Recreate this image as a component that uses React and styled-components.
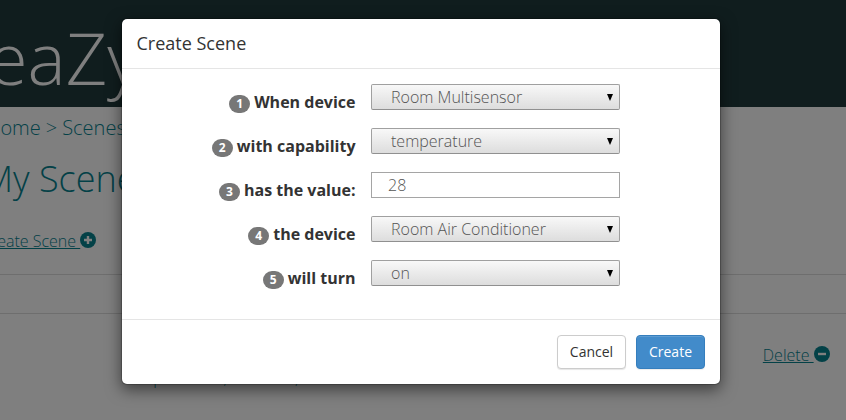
import React from "react";
import styled, { createGlobalStyle } from "styled-components";

const GlobalStyle = createGlobalStyle`
  *, *::before, *::after { box-sizing: border-box; }
  html, body { margin: 0; padding: 0; overflow: hidden; }
  body {
    font-family: "Open Sans", sans-serif;
    font-size: 16px;
    font-weight: 300;
    line-height: 22px;
    color: #333;
    background: #fff;
  }
`;

const teal = "#07828f";

const Page = styled.div`
  position: relative;
  width: 846px;
  height: 420px;
  overflow: hidden;
  background: #fff;
`;

const Banner = styled.header`
  display: flex;
  height: 107px;
  padding-top: 8px;
  background: #203a3c;
`;

const Brand = styled.div`
  margin-left: -12px;
  font-size: 72px;
  line-height: 98px;
  color: #fff;
  white-space: nowrap;
`;

const Breadcrumb = styled.nav`
  display: flex;
  gap: 5px;
  height: 28px;
  margin: 7px 0 0 -14px;
  font-size: 20px;
  line-height: 28px;
  color: ${teal};
`;

const PageTitle = styled.h1`
  height: 50px;
  margin: 12px 0 1px -18px;
  font-size: 36px;
  font-weight: 300;
  line-height: 50px;
  color: ${teal};
`;

const Action = styled.a`
  display: flex;
  align-items: flex-start;
  height: 22px;
  color: ${teal};
  white-space: pre;

  span { text-decoration: underline; }
  svg { margin-top: 2px; }
`;

const CreateRow = styled.div`
  display: flex;
  height: 69px;
  padding-top: 25px;
  margin-left: -19px;
`;

const TableHead = styled.div`
  height: 40px;
  border-top: 1px solid #ddd;
  border-bottom: 1px solid #ddd;
`;

const TableRow = styled.div`
  display: flex;
  justify-content: space-between;
  padding: 30px 16.4px 0 125px;
`;

const Summary = styled.div`
  display: flex;
  gap: 2px;
  padding-top: 23px;
  color: ${teal};
`;

const Backdrop = styled.div`
  position: absolute;
  inset: 0;
  display: flex;
  justify-content: center;
  align-items: flex-start;
  padding-top: 18px;
  background: rgba(0, 0, 0, 0.5);
`;

const Dialog = styled.section`
  width: 600px;
  margin-right: 5px;
  border: 1px solid rgba(0, 0, 0, 0.2);
  border-radius: 6px;
  background: #fff;
  background-clip: padding-box;
  box-shadow: 0 5px 15px rgba(0, 0, 0, 0.5);
`;

const DialogHeader = styled.h4`
  height: 50px;
  margin: 0;
  padding: 12px 15px;
  border-bottom: 1px solid #e5e5e5;
  font-size: 18px;
  font-weight: 400;
  line-height: 25px;
`;

const DialogBody = styled.form`
  display: grid;
  gap: 18px;
  height: 250px;
  align-content: start;
  padding-top: 15px;
`;

const Field = styled.div`
  display: grid;
  grid-template-columns: 234px 249px;
  column-gap: 15px;
  height: 26px;
`;

const Label = styled.label`
  display: flex;
  justify-content: flex-end;
  gap: 4px;
  height: 22px;
  margin-top: 7px;
  font-weight: 700;
  white-space: nowrap;
`;

const Badge = styled.span`
  width: 21px;
  height: 18px;
  margin-top: 4px;
  border-radius: 10px;
  background: #777;
  color: #fff;
  font-size: 12px;
  line-height: 17px;
  text-align: center;
`;

const SelectBox = styled.div`
  display: flex;
  justify-content: space-between;
  align-items: center;
  height: 26px;
  padding: 0 6px 0 19.5px;
  border: 1px solid #a0a0a0;
  border-bottom-color: #909090;
  border-radius: 2px;
  background: linear-gradient(#f8f8f8, #dddddd);
  color: #555;
`;

const ValueBox = styled.div`
  height: 26px;
  padding: 1px 16.5px;
  border: 1px solid #a5a5a5;
  background: #fff;
  color: #555;
`;

const DialogFooter = styled.footer`
  display: flex;
  justify-content: flex-end;
  gap: 10px;
  height: 65px;
  padding: 15px;
  border-top: 1px solid #e5e5e5;
`;

const Button = styled.button`
  width: 69px;
  height: 34px;
  padding: 0 0 0 1px;
  border: 1px solid ${(p) => (p.$primary ? "#357ebd" : "#ccc")};
  border-radius: 4px;
  background: ${(p) => (p.$primary ? "#428bca" : "#fff")};
  color: ${(p) => (p.$primary ? "#fff" : "#333")};
  font: 400 14px/20px "Open Sans", sans-serif;
  box-shadow: ${(p) =>
    p.$primary
      ? "inset 0 1px 0 rgba(255,255,255,.15), 0 1px 1px rgba(0,0,0,.075)"
      : "0 1px 1px rgba(0,0,0,.1)"};
`;

function CircleIcon({ plus }) {
  return (
    <svg width="16" height="16" viewBox="0 0 16 16">
      <circle cx="8" cy="8" r="8" fill={teal} />
      <path d={plus ? "M4 8h8M8 4v8" : "M4 8h8"} stroke="#fff" strokeWidth="2.4" />
    </svg>
  );
}

function Arrow() {
  return (
    <svg width="6" height="7" viewBox="0 0 6 7">
      <path d="M0 0h6L3 7z" fill="#000" />
    </svg>
  );
}

const fields = [
  { label: "When device", value: "Room Multisensor" },
  { label: "with capability", value: "temperature" },
  { label: "has the value:", value: "28", input: true },
  { label: "the device", value: "Room Air Conditioner" },
  { label: "will turn", value: "on" },
];

export default function App() {
  return (
    <Page>
      <GlobalStyle />
      <Banner>
        <Brand>eaZy</Brand>
      </Banner>
      <Breadcrumb>
        <span>Home</span>
        <span>&gt;</span>
        <span>Scenes</span>
      </Breadcrumb>
      <PageTitle>My Scenes</PageTitle>
      <CreateRow>
        <Action>
          <span>Create Scene </span>
          <CircleIcon plus />
        </Action>
      </CreateRow>
      <TableHead />
      <TableRow>
        <Summary>
          <span>temperatures,</span>
          <span>Room Air,</span>
          <span>on</span>
        </Summary>
        <Action>
          <span>Delete </span>
          <CircleIcon />
        </Action>
      </TableRow>
      <Backdrop>
        <Dialog>
          <DialogHeader>Create Scene</DialogHeader>
          <DialogBody>
            {fields.map((f, i) => (
              <Field key={f.label}>
                <Label>
                  <Badge>{i + 1}</Badge>
                  {f.label}
                </Label>
                {f.input ? (
                  <ValueBox>{f.value}</ValueBox>
                ) : (
                  <SelectBox>
                    {f.value}
                    <Arrow />
                  </SelectBox>
                )}
              </Field>
            ))}
          </DialogBody>
          <DialogFooter>
            <Button type="button">Cancel</Button>
            <Button type="button" $primary>
              Create
            </Button>
          </DialogFooter>
        </Dialog>
      </Backdrop>
    </Page>
  );
}
